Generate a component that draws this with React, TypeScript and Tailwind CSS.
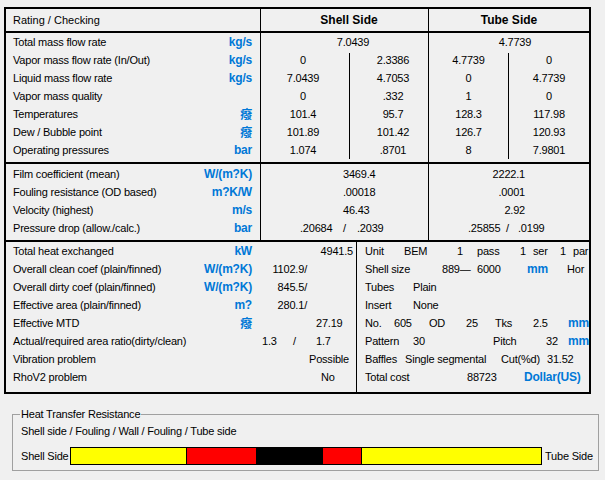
const unit = "text-[12px] font-bold text-[#0078d7]";
const deg = "text-[12px] font-bold text-[#0078d7] [font-family:'Noto_Sans_CJK_SC',sans-serif]";

interface LabelRow {
  label: string;
  u?: string;
  deg?: boolean;
}

function Label({ label, u, deg: isDeg }: LabelRow) {
  return (
    <div className="flex h-[18px] items-center justify-between pl-[7px] pr-[8px] whitespace-nowrap">
      <span>{label}</span>
      {isDeg ? <span className={deg}>癈</span> : u ? <span className={unit}>{u}</span> : null}
    </div>
  );
}

const sec1: LabelRow[] = [
  { label: "Total mass flow rate", u: "kg/s" },
  { label: "Vapor mass flow rate  (In/Out)", u: "kg/s" },
  { label: "Liquid mass flow rate", u: "kg/s" },
  { label: "Vapor mass quality" },
  { label: "Temperatures", deg: true },
  { label: "Dew / Bubble point", deg: true },
  { label: "Operating pressures", u: "bar" },
];

const shellL = ["0", "7.0439", "0", "101.4", "101.89", "1.074"];
const shellR = ["2.3386", "4.7053", ".332", "95.7", "101.42", ".8701"];
const tubeL = ["4.7739", "0", "1", "128.3", "126.7", "8"];
const tubeR = ["0", "4.7739", "0", "117.98", "120.93", "7.9801"];

const sec2: LabelRow[] = [
  { label: "Film coefficient (mean)", u: "W/(m?K)" },
  { label: "Fouling resistance (OD based)", u: "m?K/W" },
  { label: "Velocity (highest)", u: "m/s" },
  { label: "Pressure drop (allow./calc.)", u: "bar" },
];

const sec3: LabelRow[] = [
  { label: "Total heat exchanged", u: "kW" },
  { label: "Overall clean coef (plain/finned)", u: "W/(m?K)" },
  { label: "Overall dirty coef (plain/finned)", u: "W/(m?K)" },
  { label: "Effective area (plain/finned)", u: "m?" },
  { label: "Effective MTD", deg: true },
  { label: "Actual/required area ratio(dirty/clean)" },
  { label: "Vibration problem" },
  { label: "RhoV2 problem" },
];

function Cells({ items, cls }: { items: string[]; cls: string }) {
  return (
    <div className={cls}>
      {items.map((v, i) => (
        <div key={i} className="flex h-[18px] items-center justify-center">
          {v}
        </div>
      ))}
    </div>
  );
}

export default function App() {
  const row = "grid h-[18px] items-center whitespace-nowrap";
  return (
    <div className="h-[480px] w-[605px] overflow-hidden bg-[#f0f0f0] pt-[7px] text-[11px] tracking-[-0.2px] text-black [font-family:'Liberation_Sans',Arial,sans-serif]">
      <div className="ml-[4px] w-[587px] border-2 border-black">
        {/* header */}
        <div className="flex h-[24px] border-b-2 border-black">
          <div className="flex w-[254px] items-center pl-[7px] tracking-normal">Rating / Checking</div>
          <div className="flex w-[168px] items-center justify-center border-l border-black pl-[9px] text-[12px] font-bold tracking-normal">
            Shell Side
          </div>
          <div className="flex w-[161px] items-center justify-center border-l border-black text-[12px] font-bold tracking-normal">
            Tube Side
          </div>
        </div>

        {/* section 1 */}
        <div className="flex h-[131px] border-b-2 border-black">
          <div className="w-[254px]">
            {sec1.map((r) => (
              <Label key={r.label} {...r} />
            ))}
          </div>
          <div className="w-[168px] border-l border-black">
            <div className="flex h-[18px] items-center justify-center pl-[17px]">7.0439</div>
            <div className="flex">
              <Cells items={shellL} cls="w-[88px] pr-[4px]" />
              <div className="mt-[2px] h-[106px] w-px bg-black" />
              <Cells items={shellR} cls="w-[78px] pl-[8px]" />
            </div>
          </div>
          <div className="w-[161px] border-l border-black">
            <div className="flex h-[18px] items-center justify-center pl-[12px]">4.7739</div>
            <div className="flex">
              <Cells items={tubeL} cls="w-[79px]" />
              <div className="mt-[2px] h-[106px] w-px bg-black" />
              <Cells items={tubeR} cls="w-[80px]" />
            </div>
          </div>
        </div>

        {/* section 2 */}
        <div className="flex h-[78px] border-b-2 border-black">
          <div className="w-[254px] pt-[1px]">
            {sec2.map((r) => (
              <Label key={r.label} {...r} />
            ))}
          </div>
          <div className="w-[168px] border-l border-black pt-[1px]">
            {["3469.4", ".00018", "46.43"].map((v) => (
              <div key={v} className="flex h-[18px] items-center pl-[82px]">
                {v}
              </div>
            ))}
            <div className={`${row} grid-cols-[43px_14px_auto] pl-[39px]`}>
              <span>.20684</span>
              <span>/</span>
              <span>.2039</span>
            </div>
          </div>
          <div className="w-[161px] border-l border-black pt-[1px]">
            {["2222.1", ".0001", "2.92"].map((v) => (
              <div key={v} className="flex h-[18px] items-center justify-end pr-[64px]">
                {v}
              </div>
            ))}
            <div className={`${row} grid-cols-[38px_12px_auto] pl-[39px]`}>
              <span>.25855</span>
              <span>/</span>
              <span>.0199</span>
            </div>
          </div>
        </div>

        {/* section 3 */}
        <div className="flex h-[150px]">
          <div className="w-[254px]">
            {sec3.map((r) => (
              <Label key={r.label} {...r} />
            ))}
          </div>
          <div className="w-[96px] whitespace-nowrap">
            <div className="flex h-[18px] items-center justify-end pr-[3px]">4941.5</div>
            {["1102.9/", "845.5/", "280.1/"].map((v) => (
              <div key={v} className="flex h-[18px] w-[47px] items-center justify-end">
                {v}
              </div>
            ))}
            <div className="flex h-[18px] items-center pl-[56px]">27.19</div>
            <div className={`${row} grid-cols-[31px_23px_auto] pl-[2px]`}>
              <span>1.3</span>
              <span>/</span>
              <span>1.7</span>
            </div>
            <div className="flex h-[18px] items-center pl-[49px]">Possible</div>
            <div className="flex h-[18px] items-center pl-[61px]">No</div>
          </div>
          <div className="w-[233px] overflow-hidden border-l border-black pl-[8px]">
            <div className={`${row} grid-cols-[39px_53px_20px_43px_13px_27px_13px_auto]`}>
              <span>Unit</span>
              <span>BEM</span>
              <span>1</span>
              <span>pass</span>
              <span>1</span>
              <span>ser</span>
              <span>1</span>
              <span>par</span>
            </div>
            <div className={`${row} grid-cols-[77px_35px_50px_40px_auto]`}>
              <span>Shell size</span>
              <span>889—</span>
              <span>6000</span>
              <span className={unit}>mm</span>
              <span>Hor</span>
            </div>
            <div className={`${row} grid-cols-[48px_auto]`}>
              <span>Tubes</span>
              <span>Plain</span>
            </div>
            <div className={`${row} grid-cols-[48px_auto]`}>
              <span>Insert</span>
              <span>None</span>
            </div>
            <div className={`${row} grid-cols-[29px_35px_37px_29px_38px_35px_auto]`}>
              <span>No.</span>
              <span>605</span>
              <span>OD</span>
              <span>25</span>
              <span>Tks</span>
              <span>2.5</span>
              <span className={unit}>mm</span>
            </div>
            <div className={`${row} grid-cols-[48px_80px_53px_22px_auto]`}>
              <span>Pattern</span>
              <span>30</span>
              <span>Pitch</span>
              <span>32</span>
              <span className={unit}>mm</span>
            </div>
            <div className={`${row} grid-cols-[40px_96px_46px_auto]`}>
              <span>Baffles</span>
              <span>Single segmental</span>
              <span>Cut(%d)</span>
              <span>31.52</span>
            </div>
            <div className={`${row} grid-cols-[102px_57px_auto]`}>
              <span>Total cost</span>
              <span>88723</span>
              <span className={unit}>Dollar(US)</span>
            </div>
          </div>
        </div>
      </div>

      {/* heat transfer resistance group */}
      <fieldset className="ml-[12px] mt-[13px] w-[587px] border border-[#a0a0a0] pb-[5px]">
        <legend className="ml-[7px] px-[1px] leading-[14px]">Heat Transfer Resistance</legend>
        <div className="pl-[8px] pt-[3px] leading-[14px]">Shell side / Fouling / Wall / Fouling / Tube side</div>
        <div className="mt-[9px] flex items-center pl-[8px]">
          <span className="w-[49px] whitespace-nowrap">Shell Side</span>
          <div className="flex h-[18px] w-[472px] border border-black">
            <div className="w-[116px] border-r border-black bg-[#ffff00]" />
            <div className="w-[69px] bg-[#ff0000]" />
            <div className="w-[67px] bg-black" />
            <div className="w-[39px] border-r border-black bg-[#ff0000]" />
            <div className="w-[179px] bg-[#ffff00]" />
          </div>
          <span className="whitespace-nowrap pl-[3px]">Tube Side</span>
        </div>
      </fieldset>
    </div>
  );
}
